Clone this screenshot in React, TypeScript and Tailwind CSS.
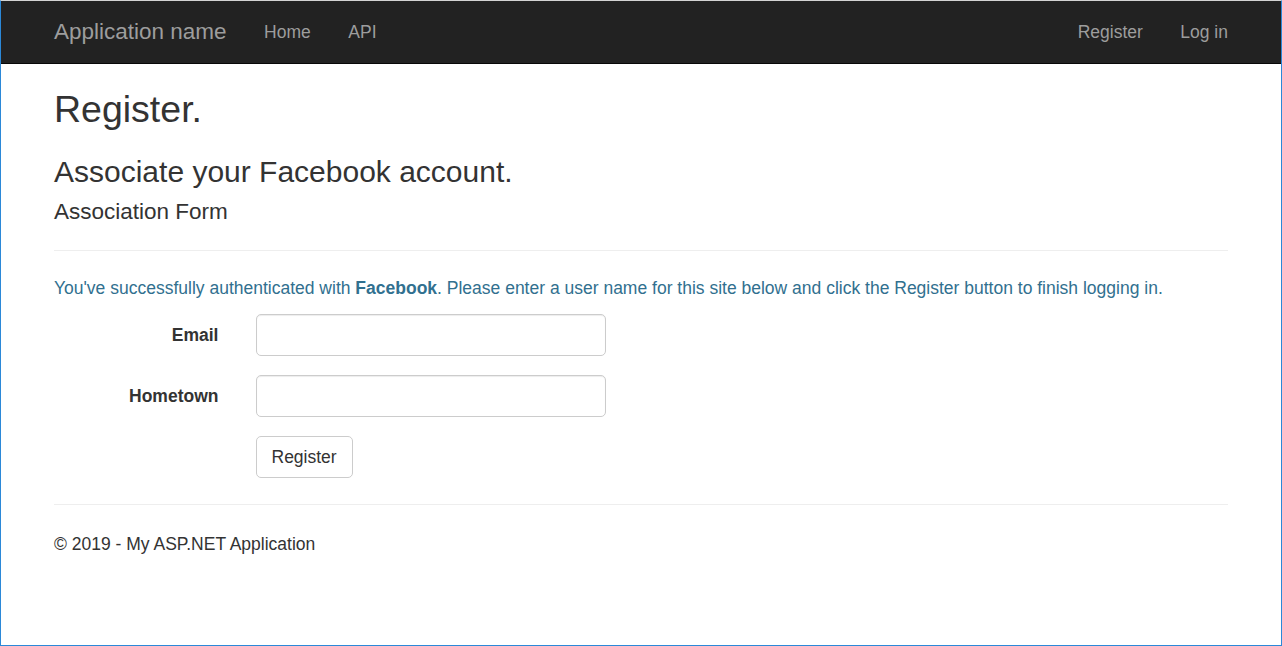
import React from "react";

const font = { fontFamily: '"Liberation Sans", Arial, Helvetica, sans-serif' };

// Horizontal form row: right-aligned label + input
function FieldRow({ label }: { label: string }) {
  return (
    <div className="flex items-center gap-[37px] mb-[18.75px]">
      <label className="w-[164.5px] text-right font-bold text-[17.5px] text-[#333]">{label}</label>
      <input
        type="text"
        className="w-[350px] h-[42.5px] px-3 border border-[#ccc] rounded-[5px] shadow-[inset_0_1px_1px_rgba(0,0,0,0.075)] outline-none"
      />
    </div>
  );
}

export default function App() {
  return (
    <div
      style={font}
      className="h-[646px] w-[1282px] bg-white border-t border-t-[#d4d4d4] border-l border-r border-b border-l-[#2b88d8] border-r-[#2b88d8] border-b-[#2b88d8] overflow-hidden text-[#333]"
    >
      {/* Navbar */}
      <div className="h-[63px] bg-[#222] border-b border-[#080808]">
        <div className="mx-auto w-[1174px] h-full flex items-center">
          <span className="text-[22.5px] text-[#9d9d9d] pr-[18.75px]">Application name</span>
          <span className="text-[17.5px] text-[#9d9d9d] px-[18.75px]">Home</span>
          <span className="text-[17.5px] text-[#9d9d9d] px-[18.75px]">API</span>
          <div className="ml-auto flex items-center gap-[37.5px]">
            <span className="text-[17.5px] text-[#9d9d9d]">Register</span>
            <span className="text-[17.5px] text-[#9d9d9d]">Log in</span>
          </div>
        </div>
      </div>

      {/* Body */}
      <main className="mx-auto w-[1174px]">
        <h2 className="text-[37.5px] leading-[1.1] mt-[25px]">Register.</h2>
        <h3 className="text-[30px] leading-[1.1] mt-[25px]">Associate your Facebook account.</h3>
        <h4 className="text-[22.5px] leading-[1.1] mt-[12px]">Association Form</h4>
        <hr className="mt-[25px] border-t border-[#eee]" />

        <p className="text-[17.5px] leading-[25px] text-[#31708f] mt-[25px]">
          You've successfully authenticated with <strong>Facebook</strong>. Please enter a user name for this site below
          and click the Register button to finish logging in.
        </p>

        <form className="mt-[12.5px]">
          <FieldRow label="Email" />
          <FieldRow label="Hometown" />
          <div className="pl-[201.5px]">
            <button
              type="button"
              className="h-[42px] px-[15px] border border-[#ccc] rounded-[5px] bg-white text-[17.5px] text-[#333]"
            >
              Register
            </button>
          </div>
        </form>

        <hr className="mt-[26px] border-t border-[#eee]" />
        <footer className="mt-[27px] text-[17.5px] leading-[25px]">© 2019 - My ASP.NET Application</footer>
      </main>
    </div>
  );
}
